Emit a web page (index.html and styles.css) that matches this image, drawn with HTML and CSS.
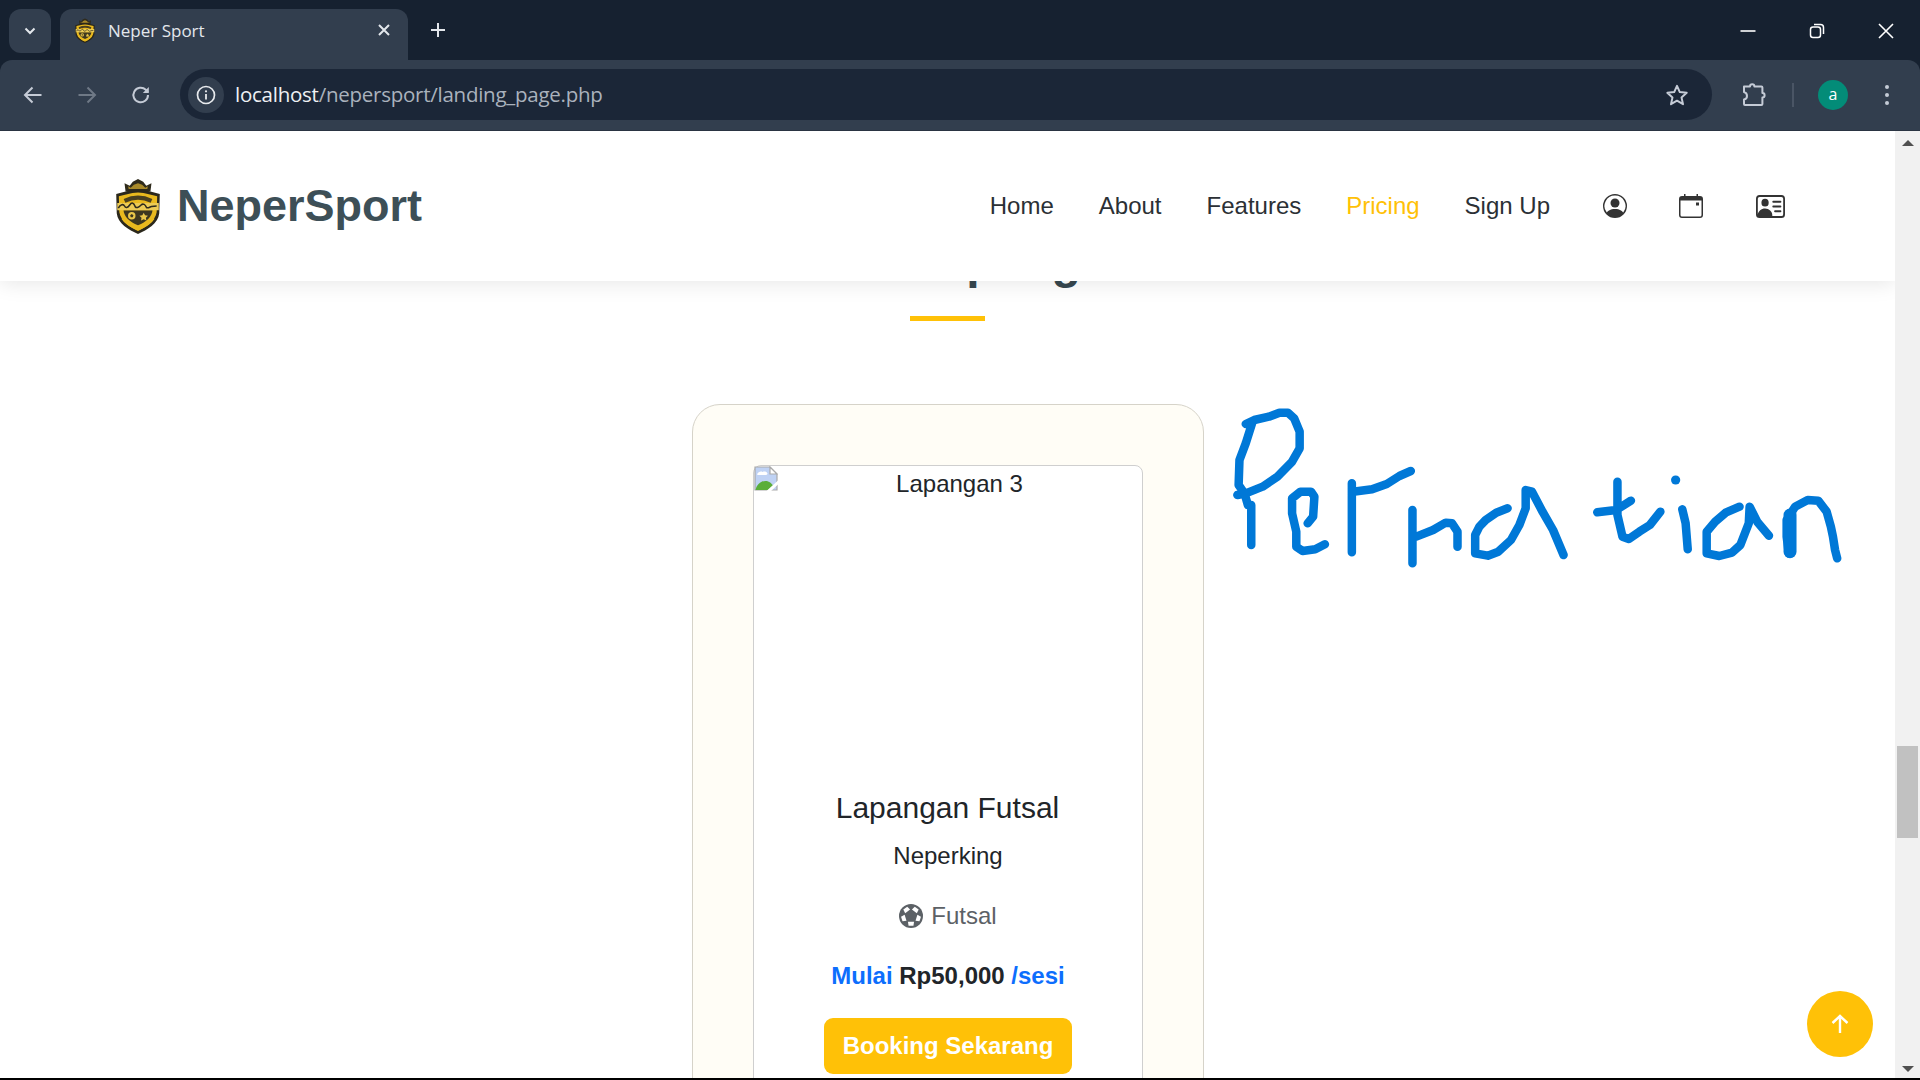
FILE: index.html
```html
<!DOCTYPE html>
<html lang="id">
<head>
<meta charset="utf-8">
<title>Neper Sport</title>
<link rel="stylesheet" href="styles.css">
</head>
<body>
<svg class="defs" width="0" height="0" aria-hidden="true">
  <symbol id="crest" viewBox="0 0 46 54">
    <path d="M11 13 10 5l5 2.500 3-4 5-2.500 5 2.500 3 4 5-2.500-1 8z" fill="#2f2b1c"/>
    <path d="M14 10.500l-.5-2.500 2.500 1.500 3-3 4-1.500 4 1.500 3 3 2.500-1.500-.5 2.500z" fill="#a98a2a"/>
    <path d="M2 15.500 11 13q12-4 24 0l9 2.500-.5 18.500C42.500 44 32 50 23 54 14 50 3.500 44 2.500 34z" fill="#2b281c"/>
    <path d="M4.500 17.500l8-1.800q10.500-3.500 21 0l8 1.800-.5 15.500c-1.500 9-10.500 14.500-18 18C15.500 47.500 6.500 42 5 33z" fill="#e9b91e"/>
    <path d="M10 22q13-6 26 0" fill="none" stroke="#4a4020" stroke-width="4"/>
    <path d="M9 31h28c-.5 6-6 11.500-14 14.500C15 42.500 9.500 37 9 31z" fill="#3d3720"/>
    <path d="M3 24h40v7H3z" fill="#eccb55"/>
    <path d="M4 29c2-4 5-4 6-2s3 2 5-1 4-2 5 1 4 1 6-1 4 0 5 2 3 0 5-.5 3-.5 5-.5" fill="none" stroke="#2f2b1c" stroke-width="1.500"/>
    <circle cx="17" cy="36.500" r="3.600" fill="#e9c64a"/>
    <path d="M17 34.800l1.600 1.200-.6 1.900h-2l-.6-1.900z" fill="#3d3720"/>
    <path d="M28.500 33.500l1.300 2.500 2.800.4-2 1.900.5 2.800-2.600-1.300-2.600 1.300.5-2.800-2-1.900 2.800-.4z" fill="#e9c64a"/>
    <path d="M8 39c3 5 9 8 15 10.500C29 47 35 44 38 39" fill="none" stroke="#e9b91e" stroke-width="2"/>
  </symbol>
</svg>
<div class="app">
  <header class="browser">
    <div class="tabstrip">
      <button class="tabsearch" type="button" aria-label="Search tabs">
        <svg width="14" height="14" viewBox="0 0 14 14"><path d="M2.500 4.500 7 9l4.500-4.500" class="stroke-light" stroke-width="2"/></svg>
      </button>
      <div class="tab">
        <svg class="favicon" viewBox="0 0 46 54"><use href="#crest"/></svg>
        <span class="tab-title">Neper Sport</span>
        <svg class="tab-close" width="14" height="14" viewBox="0 0 14 14"><path d="M2 2l10 10M12 2 2 12" class="stroke-light" stroke-width="2"/></svg>
      </div>
      <svg class="newtab" width="18" height="18" viewBox="0 0 18 18"><path d="M9 2v14M2 9h14" class="stroke-light" stroke-width="2"/></svg>
      <div class="winctl">
        <svg width="16" height="16" viewBox="0 0 16 16"><path d="M.500 8h15" stroke="#fff" stroke-width="1.600" fill="none"/></svg>
        <svg width="16" height="16" viewBox="0 0 16 16"><rect x="1.500" y="4" width="10" height="10.500" rx="2.500" fill="none" stroke="#fff" stroke-width="1.500"/><path d="M5 1.500h6.500a3 3 0 0 1 3 3V11" fill="none" stroke="#fff" stroke-width="1.500"/></svg>
        <svg width="16" height="16" viewBox="0 0 16 16"><path d="M1 1l14 14M15 1 1 15" stroke="#fff" stroke-width="1.600" fill="none"/></svg>
      </div>
    </div>
    <div class="toolbar">
      <svg class="navicon" width="22" height="22" viewBox="0 0 22 22"><path d="M19.500 11h-16M10.500 3.500 3 11l7.500 7.500" class="stroke-icon" stroke-width="2"/></svg>
      <svg class="navicon" width="22" height="22" viewBox="0 0 22 22"><path d="M2.500 11h16M11.500 3.500 19 11l-7.500 7.500" class="stroke-dim" stroke-width="2"/></svg>
      <svg class="navicon" width="22" height="22" viewBox="0 0 22 22"><path d="M18 11a7.300 7.300 0 1 1-2.200-5.200L18 8" class="stroke-icon" stroke-width="2"/><path d="M18.800 3v6h-6z" fill="#c5cbd6"/></svg>
      <div class="omnibox">
        <span class="siteinfo">
          <svg width="20" height="20" viewBox="0 0 20 20"><circle cx="10" cy="10" r="8.500" fill="none" stroke="#e8eaed" stroke-width="1.700"/><path d="M10 9v5.500" stroke="#e8eaed" stroke-width="1.800"/><circle cx="10" cy="6.300" r="1.100" fill="#e8eaed"/></svg>
        </span>
        <span class="url"><span class="url-host">localhost</span>/nepersport/landing_page.php</span>
        <svg class="star" width="24" height="24" viewBox="0 0 24 24"><path d="M12 2.800l2.800 6.300 6.900.7-5.200 4.600 1.500 6.800-6-3.500-6 3.500 1.500-6.800-5.200-4.600 6.900-.7z" fill="none" stroke="#c5cbd6" stroke-width="2" stroke-linejoin="round"/></svg>
      </div>
      <svg class="puzzle" width="24" height="24" viewBox="0 0 24 24"><path d="M2 3.500h6a2.200 2.200 0 0 1 4.400 0h7a1 1 0 0 1 1 1V10a2.200 2.200 0 0 1 0 4.400V21a1 1 0 0 1-1 1H3a1 1 0 0 1-1-1v-4.500c2.500-.5 3-1.500 3-3.500S4 9.500 2 9z" fill="none" stroke="#c5cbd6" stroke-width="2" stroke-linejoin="round"/></svg>
      <span class="tb-sep"></span>
      <span class="avatar">a</span>
      <span class="kebab"><i></i><i></i><i></i></span>
    </div>
  </header>

  <div class="viewport">
    <div class="page">
      <nav class="sitehead">
        <a class="brand">
          <svg class="brand-logo" viewBox="0 0 46 54"><use href="#crest"/></svg>
          <span class="brand-name">NeperSport</span>
        </a>
        <div class="menu">
          <a class="menu-link">Home</a>
          <a class="menu-link">About</a>
          <a class="menu-link">Features</a>
          <a class="menu-link is-active">Pricing</a>
          <a class="menu-link">Sign Up</a>
          <span class="menu-icons">
            <svg width="24" height="24" viewBox="0 0 16 16" fill="#333"><path d="M11 6a3 3 0 1 1-6 0 3 3 0 0 1 6 0"/><path fill-rule="evenodd" d="M0 8a8 8 0 1 1 16 0A8 8 0 0 1 0 8m8-7a7 7 0 0 0-5.468 11.37C3.242 11.226 4.805 10 8 10s4.757 1.225 5.468 2.37A7 7 0 0 0 8 1"/></svg>
            <svg width="24" height="24" viewBox="0 0 24 24"><path d="M3 2h2V0h1.500v2h11V0H19v2h2a3 3 0 0 1 3 3v16a3 3 0 0 1-3 3H3a3 3 0 0 1-3-3V5a3 3 0 0 1 3-3z" fill="#333"/><path d="M1.500 6.500h21V21a1.500 1.500 0 0 1-1.500 1.500H3A1.500 1.500 0 0 1 1.500 21z" fill="#fff"/><rect x="17" y="8.500" width="3" height="3" fill="#333"/></svg>
            <svg class="vcard" width="29" height="23" viewBox="0 2 16 12" preserveAspectRatio="none" fill="#333"><path d="M5 8a2 2 0 1 0 0-4 2 2 0 0 0 0 4m4-2.500a.5.5 0 0 1 .5-.5h4a.5.5 0 0 1 0 1h-4a.5.5 0 0 1-.5-.5M9 8a.5.5 0 0 1 .5-.5h4a.5.5 0 0 1 0 1h-4A.5.5 0 0 1 9 8m1 2.500a.5.5 0 0 1 .5-.5h3a.5.5 0 0 1 0 1h-3a.5.5 0 0 1-.5-.5"/><path d="M2 2a2 2 0 0 0-2 2v8a2 2 0 0 0 2 2h12a2 2 0 0 0 2-2V4a2 2 0 0 0-2-2zM1 4a1 1 0 0 1 1-1h12a1 1 0 0 1 1 1v8a1 1 0 0 1-1 1H8.960q.04-.245.04-.5C9 10.567 7.210 9 5 9c-2.086 0-3.800 1.398-3.984 3.181A1 1 0 0 1 1 12z"/></svg>
          </span>
        </div>
      </nav>

      <main class="pricing">
        <h2 class="section-title">Daftar Lapangan</h2>
        <div class="section-rule"></div>
        <article class="plan">
          <div class="field-card">
            <div class="field-photo">
              <svg class="broken" width="24" height="25" viewBox="0 0 24 25">
                <path d="M1 1h15l7 7v16H1z" fill="#bfd2f4" stroke="#a9a9a9" stroke-width="1.200"/>
                <path d="M16 1v7h7z" fill="#fff" stroke="#a9a9a9" stroke-width="1.200"/>
                <path d="M3 8.500c1.500-3 4-3.500 5.500-2.500 2-1 4-.5 5 1.500 0 1-1 1.500-3 1.500H4z" fill="#fff"/>
                <path d="M1.500 24c1.500-6 5.500-9 10-9 4 0 6 2.500 7.500 4.500l-5 4.500z" fill="#5aae3a"/>
                <path d="M12 25.500 24 14.500v4l-7.500 7z" fill="#fff"/>
              </svg>
              <span class="photo-alt">Lapangan 3</span>
            </div>
            <div class="field-body">
              <h3 class="field-name">Lapangan Futsal</h3>
              <p class="field-place">Neperking</p>
              <p class="field-type">
                <svg class="ball" width="24" height="24" viewBox="0 0 24 24">
                  <circle cx="12" cy="12" r="12" fill="#5c6166"/>
                  <g fill="#fff">
                    <path d="M12.900 5.560 15.750 2.730 19.660 5.570 17.840 9.150z"/>
                    <path transform="rotate(72 12 12)" d="M12.900 5.560 15.750 2.730 19.660 5.570 17.840 9.150z"/>
                    <path transform="rotate(144 12 12)" d="M12.900 5.560 15.750 2.730 19.660 5.570 17.840 9.150z"/>
                    <path transform="rotate(216 12 12)" d="M12.900 5.560 15.750 2.730 19.660 5.570 17.840 9.150z"/>
                    <path transform="rotate(288 12 12)" d="M12.900 5.560 15.750 2.730 19.660 5.570 17.840 9.150z"/>
                  </g>
                </svg>
                Futsal
              </p>
              <p class="field-price"><span class="price-accent">Mulai</span> Rp50,000 <span class="price-accent">/sesi</span></p>
              <a class="book-btn">Booking Sekarang</a>
            </div>
          </div>
        </article>
      </main>

      <svg class="scribble" width="660" height="190" viewBox="0 0 1568 570" preserveAspectRatio="none" fill="none" stroke="#0078d7" stroke-linecap="round" stroke-linejoin="round">
        <path vector-effect="non-scaling-stroke" stroke-width="8.500" d="M85 102 105 90 140 80 165 68 185 68 200 85 213 125 213 175 195 215 160 260 125 290 85 310 65 315"/>
        <path vector-effect="non-scaling-stroke" stroke-width="8.500" d="M100 100 85 160 70 210 68 285 82 310 90 345 98 345 98 465"/>
        <path vector-effect="non-scaling-stroke" stroke-width="8.500" d="M232 400 245 380 248 320 240 305 215 305 195 325 195 370 205 425 205 470 220 483 250 478 273 463"/>
        <path vector-effect="non-scaling-stroke" stroke-width="8.500" d="M337 280V487M340 305 385 298 420 282 450 258 477 243"/>
        <path vector-effect="non-scaling-stroke" stroke-width="8.500" d="M481 360V520M490 440 530 420 560 398 575 400 588 425 588 470"/>
        <path vector-effect="non-scaling-stroke" stroke-width="8.500" d="M707 355 680 368 655 390 640 410 630 435 630 490 660 497 685 485 715 450 735 405 750 355 750 300 765 305 790 365 815 420 840 495"/>
        <path vector-effect="non-scaling-stroke" stroke-width="8.500" d="M968 275V375L980 440 995 447 1020 425 1045 405 1070 365M920 367 965 360 1000 332"/>
        <path vector-effect="non-scaling-stroke" stroke-width="9" d="M1106 270h.5"/>
        <path vector-effect="non-scaling-stroke" stroke-width="8.500" d="M1122 358 1130 400 1135 478"/>
        <path vector-effect="non-scaling-stroke" stroke-width="8.500" d="M1258 350 1225 368 1200 395 1180 425 1180 490 1210 498 1240 488 1260 465 1280 400 1282 350 1300 395 1328 437"/>
        <path vector-effect="non-scaling-stroke" stroke-width="8.500" d="M1375 490 1370 440 1370 390 1390 350 1420 330 1445 332 1465 365 1475 410 1480 440 1485 480 1490 505"/>
        <path vector-effect="non-scaling-stroke" stroke-width="13" d="M1378 375V485"/>
      </svg>

      <a class="to-top" aria-label="Back to top">
        <svg width="20" height="20" viewBox="0 0 20 20"><path d="M10 19V2M2.500 9 10 2l7.500 7" fill="none" stroke="#fff" stroke-width="2.400"/></svg>
      </a>
    </div>
    <div class="scrollbar">
      <svg class="sb-arrow" width="14" height="8" viewBox="0 0 14 8"><path d="M7 1l6 6H1z" fill="#505050"/></svg>
      <div class="sb-track"><div class="sb-thumb"></div></div>
      <svg class="sb-arrow" width="14" height="8" viewBox="0 0 14 8"><path d="M7 7 1 1h12z" fill="#505050"/></svg>
    </div>
  </div>
  <div class="taskedge"></div>
</div>
</body>
</html>
```
FILE: styles.css
```css
* { box-sizing: border-box; }
html, body { margin: 0; height: 100%; overflow: hidden; background: #fff; }
body { font-family: "Liberation Sans", Arial, sans-serif; color: #212529; }
.defs { position: absolute; }
.app { display: flex; flex-direction: column; height: 1080px; width: 1920px; }

/* browser chrome */
.browser { height: 131px; flex: none; background: #162130; display: flex; flex-direction: column; }
.stroke-light { fill: none; stroke: #e3e7ec; }
.stroke-icon { fill: none; stroke: #c5cbd6; }
.stroke-dim { fill: none; stroke: #6f7986; }
.tabstrip { height: 60px; display: flex; align-items: flex-start; padding: 9px 0 0 9px; position: relative; }
.tabsearch { width: 42px; height: 44px; border: 0; padding: 0; background: #323e4e; border-radius: 12px; display: flex; align-items: center; justify-content: center; }
.tab { margin-left: 9px; width: 348px; height: 51px; background: #323e4e; border-radius: 12px 12px 0 0; display: flex; align-items: center; padding: 0 17px 9px 14px; }
.favicon { width: 22px; height: 25px; flex: none; }
.tab-title { margin-left: 12px; font: 400 17px "Open Sans", sans-serif; color: #e3e7ec; flex: 1; }
.tab-close { flex: none; }
.newtab { margin: 12px 0 0 21px; }
.winctl { margin-left: auto; display: flex; gap: 53px; padding: 14px 26px 0 0; }
.toolbar { height: 71px; background: #323e4e; border-radius: 12px 12px 0 0; border-bottom: 1px solid #2a3442; display: flex; align-items: center; padding: 0 22px 1px 22px; }
.navicon { flex: none; margin-right: 32px; }
.omnibox { margin-left: -4px; width: 1532px; height: 51px; background: #1b2637; border-radius: 26px; display: flex; align-items: center; padding: 0 23px 0 8px; }
.siteinfo { width: 36px; height: 36px; border-radius: 50%; background: #323e4e; display: flex; align-items: center; justify-content: center; flex: none; }
.url { margin-left: 11px; font: 400 20.500px/28px "Open Sans", sans-serif; color: #aab2bd; flex: 1; letter-spacing: -.25px; white-space: nowrap; padding-bottom: 2px; }
.url-host { color: #eef0f3; }
.puzzle { margin-left: 30px; flex: none; }
.tb-sep { width: 2px; height: 24px; background: #4a5565; margin-left: 26px; flex: none; }
.avatar { margin-left: 24px; width: 30px; height: 30px; border-radius: 50%; background: #038c78; color: #fff; font: 400 16px "Open Sans", sans-serif; display: flex; align-items: center; justify-content: center; flex: none; padding-bottom: 2px; }
.kebab { margin-left: 37px; display: flex; flex-direction: column; gap: 4px; flex: none; }
.kebab i { width: 4px; height: 4px; border-radius: 50%; background: #c5cbd6; display: block; }

/* page */
.viewport { flex: 1; display: flex; min-height: 0; }
.page { flex: 1; position: relative; overflow: hidden; background: #fff; }
.sitehead { position: absolute; z-index: 5; top: 0; left: 0; right: 0; height: 150px; background: #fff; box-shadow: 0 2px 20px rgba(0,0,0,.1); display: flex; align-items: center; justify-content: space-between; padding: 0 110px 0 114px; }
.brand { display: flex; align-items: center; gap: 15px; }
.brand-logo { width: 48px; height: 56px; flex: none; }
.brand-name { font-size: 45px; font-weight: 700; color: #3d4f57; line-height: 1; padding-bottom: 2px; }
.menu { display: flex; align-items: center; gap: 45px; }
.menu-link { font-size: 24px; color: #2b3035; }
.menu-link.is-active { color: #ffc107; }
.menu-icons { display: flex; align-items: center; gap: 52px; margin-left: 8px; }
.vcard { margin-left: 1px; }
.pricing { padding-top: 102px; display: flex; flex-direction: column; align-items: center; }
.section-title { margin: 0; font-size: 48px; line-height: 58px; font-weight: 700; color: #37474f; }
.section-rule { width: 75px; height: 5px; background: #ffc107; margin-top: 25px; }
.plan { margin-top: 83px; width: 512px; flex: none; background: #fffdf6; border: 1px solid #d6d3c9; border-radius: 28px; padding: 60px; }
.field-card { background: #fff; border: 1px solid #cfcfcf; border-radius: 8px; }
.field-photo { height: 300px; display: flex; align-items: flex-start; }
.broken { flex: none; }
.photo-alt { flex: 1; text-align: center; font-size: 24px; line-height: 36px; color: #212529; }
.field-body { padding: 24px 19px; text-align: center; }
.field-name { margin: 0 0 12px; font-size: 30px; line-height: 36px; font-weight: 400; color: #212529; }
.field-place { margin: 0 0 24px; padding-left: 1px; font-size: 24px; line-height: 36px; }
.field-type { margin: 0 0 24px; padding-left: 1px; font-size: 24px; line-height: 36px; color: #5c6166; display: flex; align-items: center; justify-content: center; gap: 8px; }
.ball { flex: none; }
.field-price { margin: 0 0 24px; padding-left: 1px; font-size: 24px; line-height: 36px; font-weight: 700; color: #212529; }
.price-accent { color: #0d6efd; }
.book-btn { display: block; width: 248px; height: 56px; margin: 0 auto; padding-left: 1px; background: #ffc107; border-radius: 9px; color: #fff; font-size: 24px; line-height: 56px; font-weight: 700; }
.scribble { position: absolute; left: 1210px; top: 259px; z-index: 2; }
.to-top { position: absolute; z-index: 6; left: 1807px; top: 860px; width: 66px; height: 66px; border-radius: 50%; background: #ffc107; display: flex; align-items: center; justify-content: center; }

/* scrollbar */
.scrollbar { width: 25px; flex: none; background: #f1f1f1; display: flex; flex-direction: column; align-items: center; padding: 8px 0 5px; }
.sb-arrow { flex: none; }
.sb-track { flex: 1; width: 100%; padding: 599px 2px 0; }
.sb-thumb { height: 92px; background: #c1c1c1; }
.taskedge { height: 2px; background: #000; flex: none; }
```
